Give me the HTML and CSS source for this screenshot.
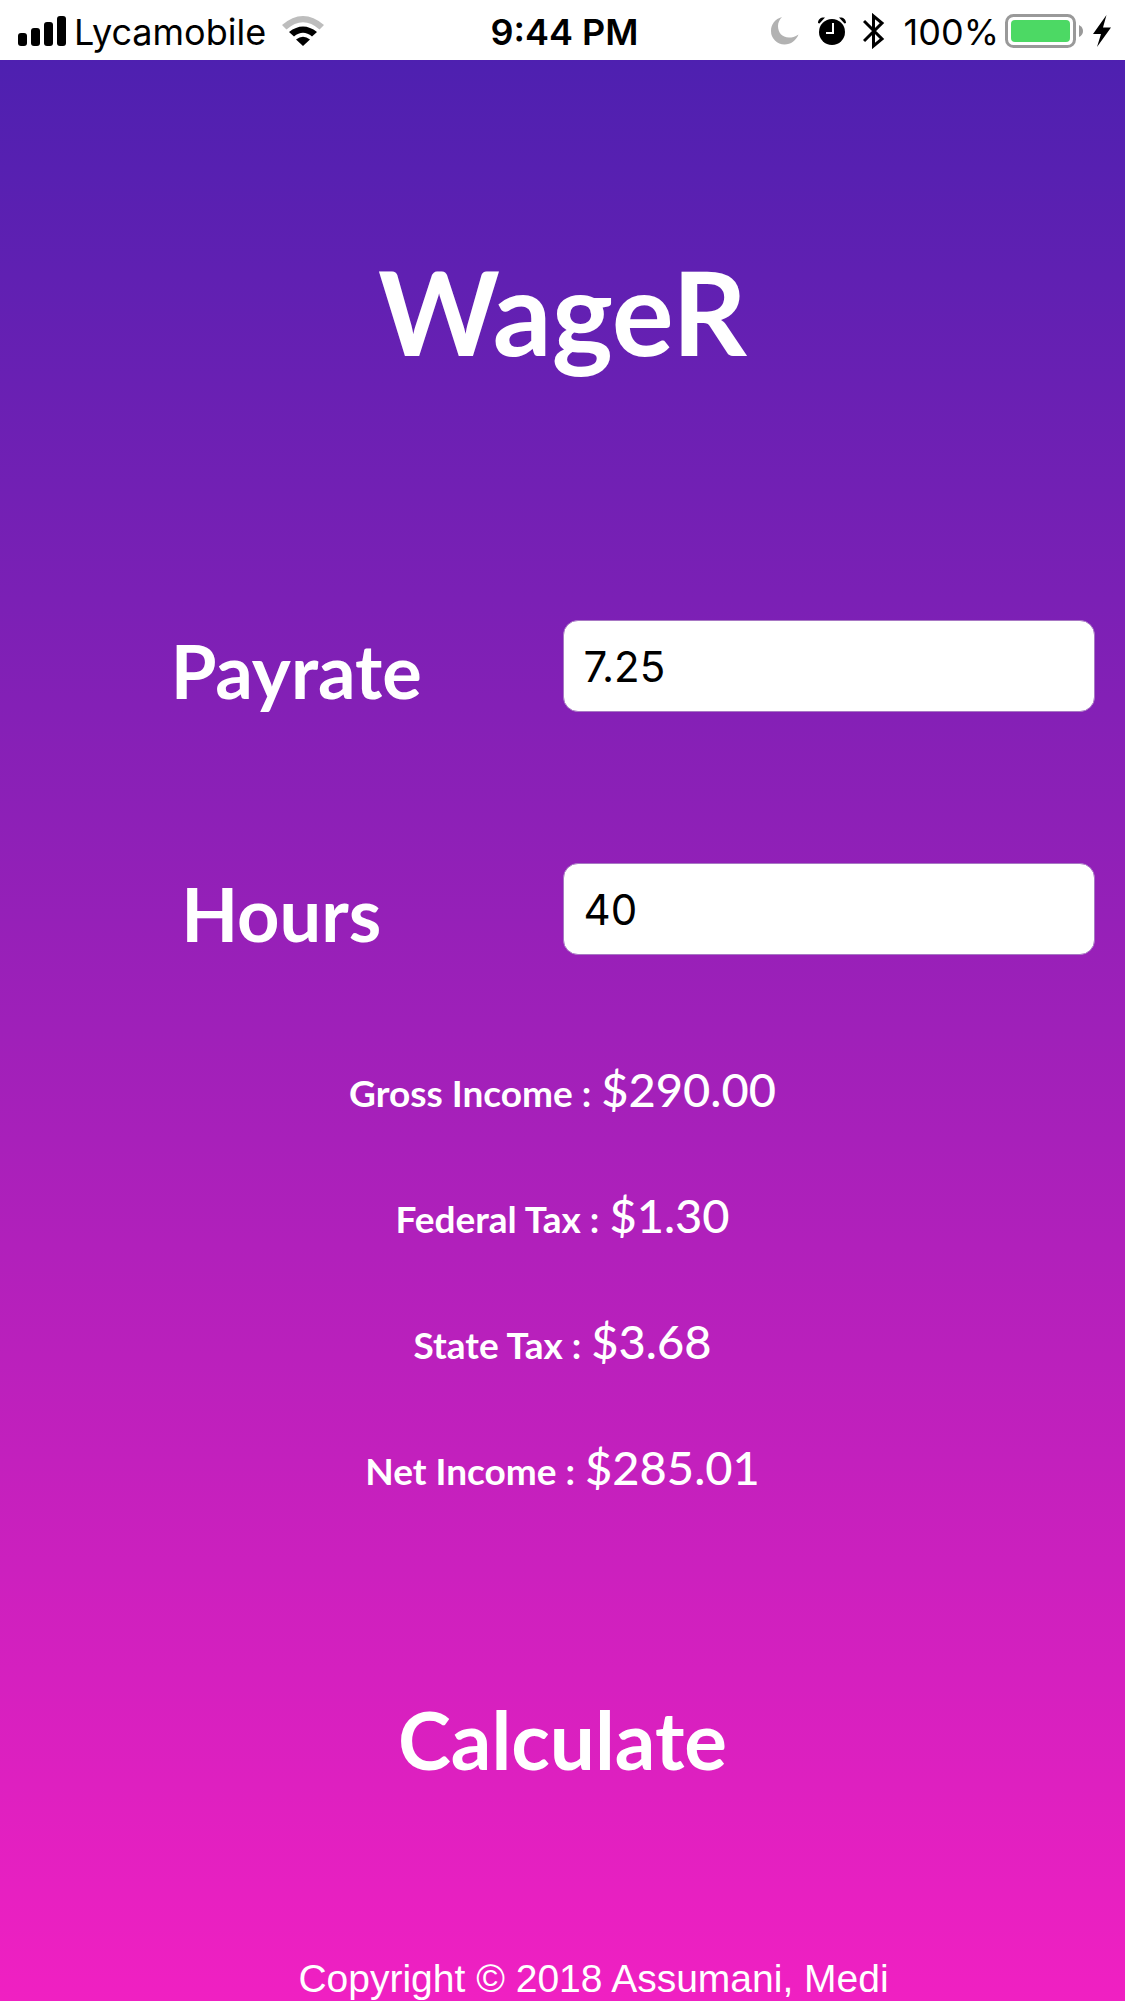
FILE: index.html
```html
<!DOCTYPE html>
<html lang="en">
<head>
<meta charset="utf-8">
<meta name="viewport" content="width=device-width, initial-scale=1">
<title>WageR</title>
<link rel="stylesheet" href="styles.css">
</head>
<body>
<header class="status">
  <div class="status-left">
    <svg class="signal" width="48" height="30" viewBox="0 0 48 30" aria-hidden="true"><rect x="0" y="17" width="9" height="13" rx="3"/><rect x="13" y="12" width="9" height="18" rx="3"/><rect x="26" y="6" width="9" height="24" rx="3"/><rect x="39" y="0" width="9" height="30" rx="3"/></svg>
    <span class="carrier">Lycamobile</span>
    <svg class="wifi" width="42" height="30" viewBox="0 0 42 30" aria-hidden="true"><path fill="#bdbdbd" d="M0 9Q21-9 42 9L37.500 13.500Q21-1 4.500 13.500Z"/><path d="M7 16Q21 5 35 16L30 20.500Q21 13 12 20.500Z"/><path d="M14 23.500Q21 18 28 23.500L21 30Z"/></svg>
  </div>
  <span class="time">9:44 PM</span>
  <div class="status-right">
    <svg width="28" height="28" viewBox="0 0 28 28" aria-hidden="true"><path fill="#b2b2b2" d="M11 0C4 2 0 7.500 0 14A13.500 13.500 0 0 0 13.500 27.500C20 27.500 25 23.500 27.500 17.500C24 20 21 20.500 18 20.500C11 20.500 7 15.500 7 9C7 5.500 8.500 2.500 11 0Z"/></svg>
    <svg class="alarm" width="28" height="28" viewBox="0 0 28 28" aria-hidden="true"><circle cx="14" cy="15" r="13"/><path d="M0 6C0 2 3 0 7 .5L1.500 6.500ZM28 6C28 2 25 0 21 .5L26.500 6.500Z"/><path fill="none" stroke="#fff" stroke-width="2" d="M15 6V16H8"/></svg>
    <svg class="bluetooth" width="22" height="36" viewBox="0 0 22 36" aria-hidden="true"><path fill="none" stroke="#000" stroke-width="3" d="M1 8L19 26L10.500 33V3L19 10L1 28"/></svg>
    <span class="percent">100%</span>
    <svg class="battery" width="78" height="34" viewBox="0 0 78 34" aria-hidden="true"><rect x="1.500" y="1.500" width="68" height="31" rx="7" fill="none" stroke="#999" stroke-width="3"/><rect x="6" y="6" width="59" height="22" rx="4" fill="#4cd964"/><path fill="#999" d="M74 11Q78 13 78 17T74 23Z"/></svg>
    <svg class="bolt" width="18" height="32" viewBox="0 0 18 32" aria-hidden="true"><path d="M13.500 0L0 19H8L4 32L18 12.500H10Z"/></svg>
  </div>
</header>
<main class="app">
  <h1 class="title">WageR</h1>
  <form class="form">
    <div class="field">
      <label class="label label-rate" for="rate">Payrate</label>
      <input class="input" id="rate" type="text" inputmode="decimal" value="7.25">
    </div>
    <div class="field">
      <label class="label" for="hours">Hours</label>
      <input class="input" id="hours" type="text" inputmode="decimal" value="40">
    </div>
    <div class="results">
      <p class="result"><span>Gross Income :</span> <span class="amount">$290.00</span></p>
      <p class="result"><span>Federal Tax :</span> <span class="amount">$1.30</span></p>
      <p class="result"><span>State Tax :</span> <span class="amount">$3.68</span></p>
      <p class="result"><span>Net Income :</span> <span class="amount">$285.01</span></p>
    </div>
    <button class="calculate" type="button">Calculate</button>
  </form>
  <footer class="footer">Copyright © 2018 Assumani, Medi</footer>
</main>
</body>
</html>
```
FILE: styles.css
```css
* { box-sizing: border-box; }

body {
  margin: 0;
  min-height: 100vh;
  display: flex;
  flex-direction: column;
  font-family: Inter, sans-serif;
  color: #000;
}

.status {
  display: grid;
  grid-template-columns: 1fr auto 1fr;
  align-items: center;
  height: 60px;
  padding: 0 14px 0 18px;
  background: #fff;
  font-size: 36px;
  line-height: 60px;
}

.status svg { flex: none; display: block; }
.status-left, .status-right { display: flex; align-items: center; }
.status-right { justify-content: flex-end; }
.carrier { margin: 0 16px 0 8px; padding-top: 2px; }
.time { font-weight: 600; padding-top: 2px; }
.alarm { margin-left: 19px; }
.bluetooth { margin-left: 17px; }
.percent { margin: 0 6px 0 19px; padding-top: 2px; }
.bolt { margin-left: 10px; }

.app {
  flex: 1;
  display: flex;
  flex-direction: column;
  color: #fff;
  background: linear-gradient(#4e20b0, #f020c2);
  font-family: "Marker Felt", Lato, sans-serif;
  font-weight: 700;
}

.title {
  margin: 162px 0 0;
  font-size: 116px;
  line-height: 180px;
  font-weight: 700;
  text-align: center;
}

.form { display: flex; flex-direction: column; padding-top: 213px; }

.field {
  display: grid;
  grid-template-columns: 1fr 1fr;
  align-items: center;
  height: 92px;
  margin-bottom: 151px;
}

.label { font-size: 74px; line-height: 92px; padding-top: 10px; text-align: center; }
.label-rate { padding-left: 30px; }

.input {
  height: 92px;
  min-width: 0;
  margin-right: 30px;
  padding: 0 20px;
  border: 1px solid #a878c4;
  border-radius: 15px;
  background: #fff;
  color: #000;
  font: 400 42px Inter, sans-serif;
}

.results { margin-top: -75px; }

.result {
  display: flex;
  justify-content: center;
  align-items: baseline;
  gap: 10px;
  height: 126px;
  margin: 0;
  font-size: 37px;
  line-height: 126px;
}

.amount { font-size: 47px; font-weight: 500; }

.calculate {
  align-self: center;
  margin-top: 149px;
  padding: 0;
  border: 0;
  background: none;
  color: inherit;
  font: inherit;
  font-size: 80px;
  line-height: 120px;
  cursor: pointer;
}

.footer {
  margin-top: auto;
  padding-left: 62px;
  font: 400 39px/44px "Liberation Sans", Arial, sans-serif;
  text-align: center;
}
```
